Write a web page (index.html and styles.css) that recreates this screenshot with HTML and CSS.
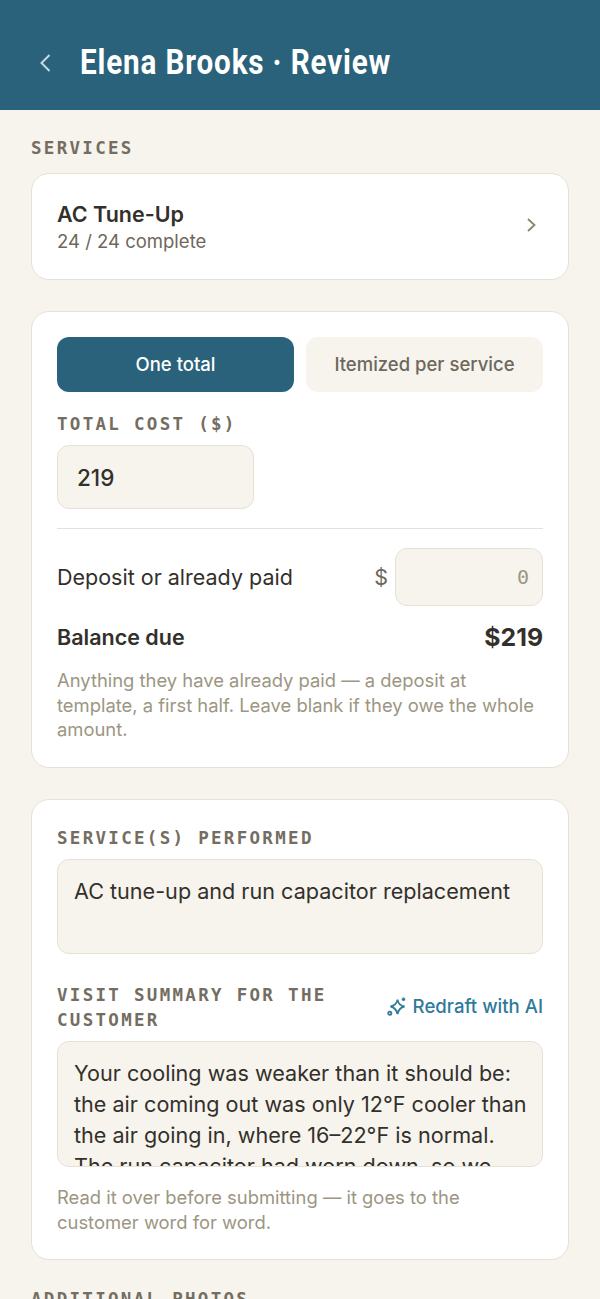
FILE: index.html
```html
<!DOCTYPE html>
<html>

<head>
    <meta charset="utf-8">
    <title>Elena Brooks · Review</title>
    <meta name="viewport" content="width=device-width, initial-scale=1">
    <link rel="stylesheet" href="styles.css">
</head>

<body>
    <header class="top-bar">
        <svg class="back-icon" width="24" height="24" viewBox="0 0 24 24"><path d="M15.5 4l-8 8 8 8"/></svg>
        <h1 class="top-title">Elena Brooks · Review</h1>
    </header>

    <main class="content">
        <div class="section-label">SERVICES</div>
        <div class="card service-card">
            <div>
                <div class="service-name">AC Tune-Up</div>
                <div class="service-sub">24 / 24 complete</div>
            </div>
            <svg class="chevron" width="10" height="16" viewBox="0 0 10 16"><path d="M2 2l6.5 6L2 14"/></svg>
        </div>

        <div class="card cost-card">
            <div class="toggle">
                <div class="toggle-btn active">One total</div>
                <div class="toggle-btn">Itemized per service</div>
            </div>
            <div class="field-label">TOTAL COST ($)</div>
            <div class="input total-input">219</div>
            <hr class="divider">
            <div class="deposit-row">
                <span class="deposit-label">Deposit or already paid</span>
                <span class="dollar">$</span>
                <div class="input deposit-input">0</div>
            </div>
            <div class="balance-row">
                <span class="balance-label">Balance due</span>
                <span class="balance-value">$219</span>
            </div>
            <p class="hint">Anything they have already paid — a deposit at template, a first half. Leave blank if they owe the whole amount.</p>
        </div>

        <div class="card summary-card">
            <div class="field-label">SERVICE(S) PERFORMED</div>
            <div class="input text-area performed">AC tune-up and run capacitor replacement</div>
            <div class="summary-head">
                <div class="field-label summary-label">VISIT SUMMARY FOR THE CUSTOMER</div>
                <div class="redraft">
                    <svg width="20" height="20" viewBox="0 0 20 20"><path d="M10.5 3.5C11 7.5 12.5 9.5 17.5 10.5 13 11.5 11.5 13.5 10.5 18 9.500 13.5 8 11.5 3.500 10.500 8 9.500 10 7.500 10.500 3.500z"/><path d="M16.500 1.500v3.600M14.700 3.300h3.600"/><circle cx="2.800" cy="17.300" r="1.600"/></svg>
                    <span>Redraft with AI</span>
                </div>
            </div>
            <div class="input text-area summary-text">Your cooling was weaker than it should be: the air coming out was only 12°F cooler than the air going in, where 16–22°F is normal. The run capacitor had worn down, so we replaced it and checked the system again.</div>
            <p class="hint summary-hint">Read it over before submitting — it goes to the customer word for word.</p>
        </div>

        <div class="section-label photos-label">ADDITIONAL PHOTOS</div>
    </main>
</body>

</html>
```

FILE: styles.css
```css
html, body {
    margin: 0;
    height: 1299px;
    overflow: hidden;
}

body {
    background-color: #F7F4EE;
    font-family: 'Inter', sans-serif;
    color: #33302B;
}

.top-bar {
    height: 110px;
    background-color: #2A627B;
    display: flex;
    align-items: center;
    padding: 15px 0 0 34px;
    box-sizing: border-box;
}

.back-icon {
    fill: none;
    stroke: #C9D8DF;
    stroke-width: 2;
    margin-right: 22px;
    flex: none;
}

/* no condensed family installed, so the title is squeezed */
.top-title {
    margin: 0;
    color: #fff;
    font-family: 'Roboto', sans-serif;
    font-size: 35px;
    font-weight: 700;
    letter-spacing: 1px;
    white-space: nowrap;
    transform: scaleX(0.847);
    transform-origin: left center;
}

.content {
    padding: 25px 31px 0;
}

.section-label, .field-label {
    font-family: 'DejaVu Sans Mono', monospace;
    font-weight: 700;
    font-size: 17.5px;
    line-height: 25px;
    letter-spacing: 2.3px;
    color: #746D62;
    padding-top: 1px;
    margin-bottom: -1px;
}

.card {
    background: #fff;
    border: 1.5px solid #E6E1D6;
    border-radius: 18px;
    box-sizing: border-box;
}

.service-card {
    margin-top: 13px;
    height: 107px;
    padding: 0 32px 3px 25px;
    display: flex;
    align-items: center;
    justify-content: space-between;
}

.service-card > div {
    margin-top: 3px;
}

.service-name {
    font-size: 21.5px;
    font-weight: 600;
    line-height: 28px;
}

.service-sub {
    font-size: 18.5px;
    line-height: 26px;
    color: #6E675C;
}

.chevron {
    fill: none;
    stroke: #8A8371;
    stroke-width: 1.8;
}

.cost-card {
    margin-top: 31px;
    height: 457px;
    padding: 25px;
}

.toggle {
    display: flex;
    gap: 12px;
}

.toggle-btn {
    flex: 1;
    height: 55px;
    border-radius: 12px;
    background: #F7F4EE;
    color: #6E675C;
    font-size: 18.5px;
    font-weight: 500;
    display: flex;
    align-items: center;
    justify-content: center;
    padding-bottom: 2px;
    box-sizing: border-box;
}

.toggle-btn.active {
    background: #2A627B;
    color: #fff;
}

.cost-card .field-label {
    margin-top: 19px;
}

.input {
    background: #F7F4EE;
    border: 1.5px solid #E6E1D6;
    border-radius: 12px;
    box-sizing: border-box;
}

.total-input {
    margin-top: 9px;
    width: 197px;
    height: 64px;
    padding-left: 19px;
    display: flex;
    align-items: center;
    font-size: 22.5px;
    font-weight: 500;
}

.divider {
    border: none;
    border-top: 1.5px solid #E6E1D6;
    margin: 19px 0;
}

.deposit-row, .balance-row {
    display: flex;
    align-items: center;
}

.deposit-label {
    flex: 1;
    font-size: 21.5px;
}

.dollar {
    font-size: 21.5px;
    color: #6E675C;
    margin-right: 7px;
}

.deposit-input {
    width: 148px;
    height: 58px;
    padding-right: 13px;
    display: flex;
    align-items: center;
    justify-content: flex-end;
    font-family: 'DejaVu Sans Mono', monospace;
    font-size: 20px;
    color: #9C9683;
}

.balance-row {
    margin-top: 16px;
    justify-content: space-between;
}

.balance-label {
    font-size: 21.5px;
    font-weight: 600;
}

.balance-value {
    font-size: 24.8px;
    font-weight: 700;
}

.hint {
    margin: 16px 0 0;
    font-size: 18.4px;
    line-height: 24.7px;
    color: #9C9683;
}

.summary-card {
    margin-top: 31px;
    height: 461px;
    padding: 25px;
}

.text-area {
    font-size: 21.6px;
    line-height: 31px;
    padding: 16px 12px 16px 16px;
}

.performed {
    margin-top: 9px;
    height: 95px;
}

.summary-head {
    display: flex;
    align-items: center;
    margin-top: 28px;
    justify-content: space-between;
}

.summary-label {
    width: 290px;
}

.redraft {
    display: flex;
    align-items: center;
    gap: 6px;
    font-size: 18.6px;
    font-weight: 500;
    color: #2F7A9C;
    margin-top: -2px;
}

.redraft svg {
    fill: none;
    stroke: #2F7A9C;
    stroke-width: 1.8;
}

.summary-text {
    margin-top: 9px;
    height: 126px;
    overflow: hidden;
}

.summary-hint {
    margin-top: 18px;
}

.photos-label {
    margin-top: 26px;
}
```
